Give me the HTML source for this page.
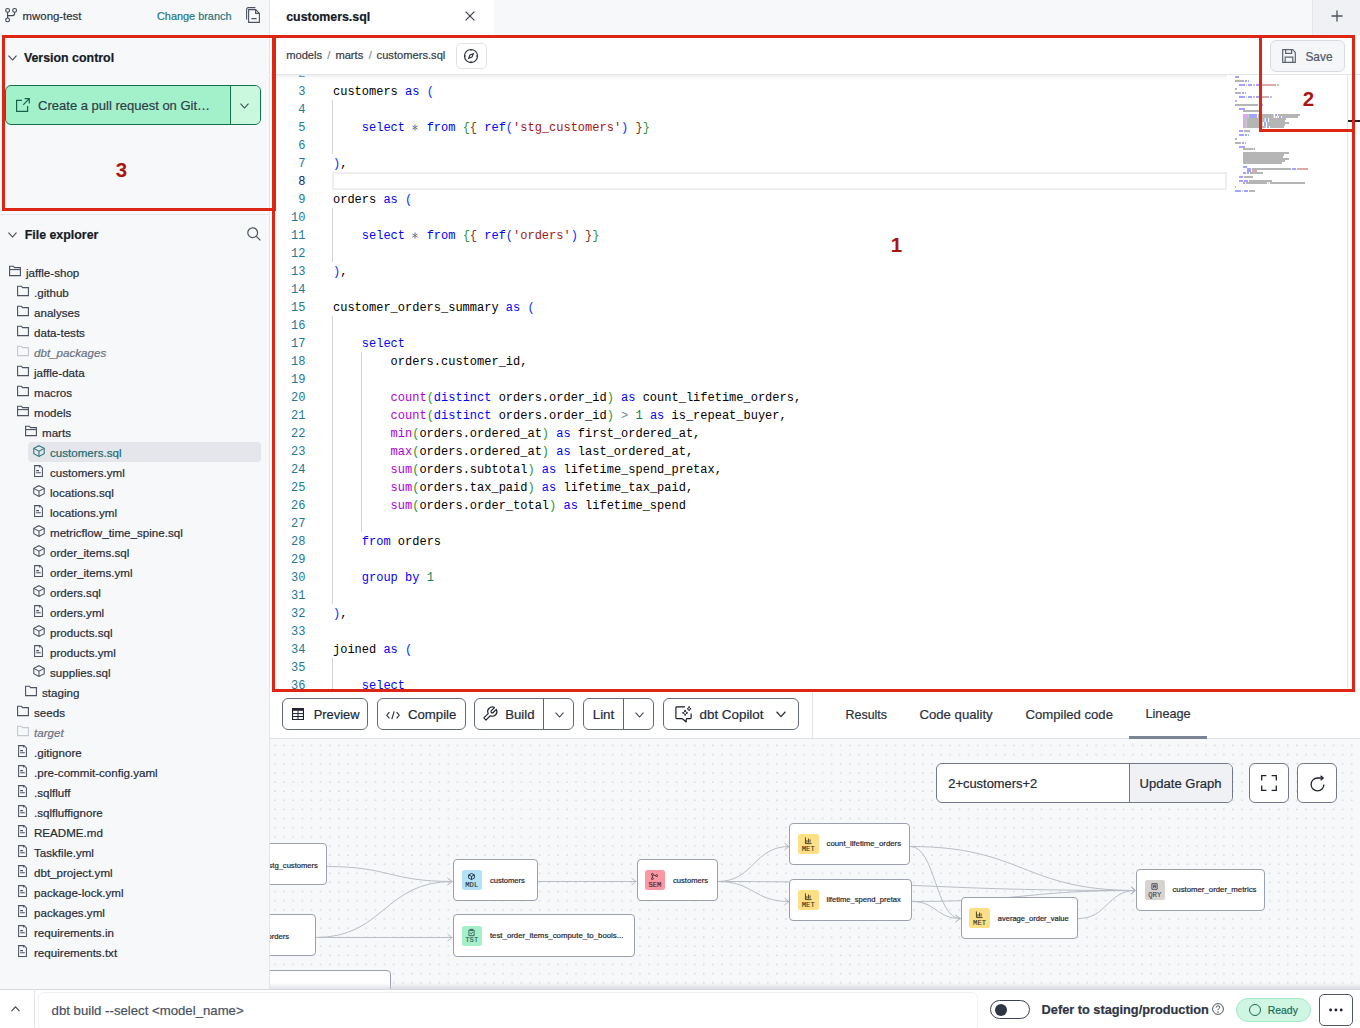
<!DOCTYPE html>
<html><head><meta charset="utf-8"><style>
*{box-sizing:border-box;margin:0;padding:0}
html,body{width:1360px;height:1028px;overflow:hidden;background:#fff;font-family:"Liberation Sans",sans-serif}
.abs{position:absolute}
.t{position:absolute;white-space:nowrap;line-height:1;-webkit-text-stroke:0.2px currentColor}
svg{position:absolute;overflow:visible}
.mono{font-family:"Liberation Mono",monospace}
.ln{position:absolute;left:0;width:34.5px;text-align:right;font-size:12px;line-height:18px}
.cl{position:absolute;left:62px;white-space:pre;font-size:12px;line-height:18px;color:#000}
.red{position:absolute;border:3px solid #dd2614}
.rl{position:absolute;color:#a8170f;font-weight:bold;font-size:20.5px;line-height:1}
</style></head><body>
<div class="abs" style="left:0;top:0;width:270px;height:989px;background:#f7f8fa;border-right:1px solid #e3e5ea"></div>
<svg style="left:5px;top:8px" width="12" height="14" viewBox="0 0 12 14" fill="none" stroke="#3d4452" stroke-width="1.1"><circle cx="2.6" cy="2.4" r="1.9"/><circle cx="9.6" cy="2.4" r="1.9"/><circle cx="2.6" cy="11.9" r="1.9"/><path d="M2.6 4.3V10M9.6 4.3V5.6Q9.6 7.6 7.6 7.6H2.6"/></svg>
<div class="t" style="left:22.6px;top:11.35px;font-size:11.4px;color:#2b3240;font-weight:normal;font-style:normal;">mwong-test</div>
<div class="t" style="left:157px;top:10.77px;font-size:10.9px;color:#23767b;font-weight:normal;font-style:normal;">Change branch</div>
<svg style="left:246px;top:7px" width="15" height="16" viewBox="0 0 15 16" fill="none" stroke="#4b5261" stroke-width="1.1"><path d="M0.6 12.6V2.4Q0.6 0.6 2.4 0.6H9.4"/><path d="M2.6 2.6H9.6L13.4 6.4V15.4H2.6Z"/><path d="M9.6 2.6V6.4H13.4M5.4 11.6H10.6"/></svg>
<svg style="left:8px;top:54.5px" width="9" height="6" viewBox="0 0 9 6" fill="none" stroke="#3d4452" stroke-width="1.1"><path d="M0.5 0.6L4.5 5L8.5 0.6"/></svg>
<div class="t" style="left:23.9px;top:51.50px;font-size:12.4px;color:#151b27;font-weight:bold;font-style:normal;">Version control</div>
<div class="abs" style="left:4.5px;top:85px;width:256.5px;height:40px;border:1px solid #12704f;border-radius:6px;background:#a3f1cb;overflow:hidden"><div class="abs" style="left:224px;top:0;width:33px;height:40px;background:#c9f8df;border-left:1px solid #12704f"></div></div>
<svg style="left:16px;top:98px" width="14" height="14" viewBox="0 0 14 14" fill="none" stroke="#18624b" stroke-width="1.2"><path d="M6 2.4H0.6V13.4H11.6V8"/><path d="M7.2 6.8L13.3 0.7M8.6 0.7H13.3V5.4"/></svg>
<div class="t" style="left:38.1px;top:99.40px;font-size:13.0px;color:#2f3d47;font-weight:normal;font-style:normal;">Create a pull request on Git…</div>
<svg style="left:240px;top:102.5px" width="9" height="6" viewBox="0 0 9 6" fill="none" stroke="#3b4a52" stroke-width="1.1"><path d="M0.5 0.6L4.5 5L8.5 0.6"/></svg>
<div class="abs" style="left:0;top:214px;width:270px;height:1px;background:#e3e5ea"></div>
<svg style="left:8px;top:231.5px" width="9" height="6" viewBox="0 0 9 6" fill="none" stroke="#3d4452" stroke-width="1.1"><path d="M0.5 0.6L4.5 5L8.5 0.6"/></svg>
<div class="t" style="left:24.7px;top:228.50px;font-size:12.4px;color:#151b27;font-weight:bold;font-style:normal;">File explorer</div>
<svg style="left:247px;top:226.5px" width="14" height="14" viewBox="0 0 14 14" fill="none" stroke="#4b5261" stroke-width="1.2"><circle cx="5.7" cy="5.7" r="4.9"/><path d="M9.3 9.3L13.3 13.3"/></svg>
<svg style="left:9px;top:265.2px" width="12" height="12" viewBox="0 0 12 12" fill="none" stroke="#4a5160" stroke-width="1.1"><path d="M0.6 1.2H4.4L5.6 2.6H11.4V10.6H0.6Z"/><path d="M0.6 4.6H11.4"/></svg>
<div class="t" style="left:26px;top:267.18px;font-size:11.6px;color:#262c37;font-weight:normal;font-style:normal;">jaffle-shop</div>
<svg style="left:17px;top:285.2px" width="12" height="12" viewBox="0 0 12 12" fill="none" stroke="#4a5160" stroke-width="1.1"><path d="M0.6 1.2H4.4L5.6 2.6H11.4V10.6H0.6Z"/></svg>
<div class="t" style="left:34px;top:287.18px;font-size:11.6px;color:#262c37;font-weight:normal;font-style:normal;">.github</div>
<svg style="left:17px;top:305.2px" width="12" height="12" viewBox="0 0 12 12" fill="none" stroke="#4a5160" stroke-width="1.1"><path d="M0.6 1.2H4.4L5.6 2.6H11.4V10.6H0.6Z"/></svg>
<div class="t" style="left:34px;top:307.18px;font-size:11.6px;color:#262c37;font-weight:normal;font-style:normal;">analyses</div>
<svg style="left:17px;top:325.2px" width="12" height="12" viewBox="0 0 12 12" fill="none" stroke="#4a5160" stroke-width="1.1"><path d="M0.6 1.2H4.4L5.6 2.6H11.4V10.6H0.6Z"/></svg>
<div class="t" style="left:34px;top:327.18px;font-size:11.6px;color:#262c37;font-weight:normal;font-style:normal;">data-tests</div>
<svg style="left:17px;top:345.2px" width="12" height="12" viewBox="0 0 12 12" fill="none" stroke="#c3c7cf" stroke-width="1.1"><path d="M0.6 1.2H4.4L5.6 2.6H11.4V10.6H0.6Z"/></svg>
<div class="t" style="left:34px;top:347.18px;font-size:11.6px;color:#6b7280;font-weight:normal;font-style:italic;">dbt_packages</div>
<svg style="left:17px;top:365.2px" width="12" height="12" viewBox="0 0 12 12" fill="none" stroke="#4a5160" stroke-width="1.1"><path d="M0.6 1.2H4.4L5.6 2.6H11.4V10.6H0.6Z"/></svg>
<div class="t" style="left:34px;top:367.18px;font-size:11.6px;color:#262c37;font-weight:normal;font-style:normal;">jaffle-data</div>
<svg style="left:17px;top:385.2px" width="12" height="12" viewBox="0 0 12 12" fill="none" stroke="#4a5160" stroke-width="1.1"><path d="M0.6 1.2H4.4L5.6 2.6H11.4V10.6H0.6Z"/></svg>
<div class="t" style="left:34px;top:387.18px;font-size:11.6px;color:#262c37;font-weight:normal;font-style:normal;">macros</div>
<svg style="left:17px;top:405.2px" width="12" height="12" viewBox="0 0 12 12" fill="none" stroke="#4a5160" stroke-width="1.1"><path d="M0.6 1.2H4.4L5.6 2.6H11.4V10.6H0.6Z"/><path d="M0.6 4.6H11.4"/></svg>
<div class="t" style="left:34px;top:407.18px;font-size:11.6px;color:#262c37;font-weight:normal;font-style:normal;">models</div>
<svg style="left:25px;top:425.2px" width="12" height="12" viewBox="0 0 12 12" fill="none" stroke="#4a5160" stroke-width="1.1"><path d="M0.6 1.2H4.4L5.6 2.6H11.4V10.6H0.6Z"/><path d="M0.6 4.6H11.4"/></svg>
<div class="t" style="left:42px;top:427.18px;font-size:11.6px;color:#262c37;font-weight:normal;font-style:normal;">marts</div>
<div class="abs" style="left:28px;top:442px;width:233px;height:20px;background:#e4e6eb;border-radius:4px"></div>
<svg style="left:33px;top:445px" width="12" height="12" viewBox="0 0 12 12" fill="none" stroke="#2b7479" stroke-width="1.05"><path d="M6 0.7L11.2 3.4V8.8L6 11.5L0.8 8.8V3.4Z"/><path d="M0.8 3.4L6 6.1L11.2 3.4M6 6.1V11.5"/></svg>
<div class="t" style="left:50px;top:447.18px;font-size:11.6px;color:#1b6b70;font-weight:normal;font-style:normal;">customers.sql</div>
<svg style="left:34.3px;top:465px" width="9" height="12" viewBox="0 0 9 12" fill="none" stroke="#4a5160" stroke-width="1.05"><path d="M0.6 0.6H6L8.4 3V11.4H0.6Z"/><path d="M5.6 0.6V2.6"/><path d="M2.2 5.6H5M2.2 7.8H6.8"/></svg>
<div class="t" style="left:50px;top:467.18px;font-size:11.6px;color:#262c37;font-weight:normal;font-style:normal;">customers.yml</div>
<svg style="left:33px;top:485px" width="12" height="12" viewBox="0 0 12 12" fill="none" stroke="#4a5160" stroke-width="1.05"><path d="M6 0.7L11.2 3.4V8.8L6 11.5L0.8 8.8V3.4Z"/><path d="M0.8 3.4L6 6.1L11.2 3.4M6 6.1V11.5"/></svg>
<div class="t" style="left:50px;top:487.18px;font-size:11.6px;color:#262c37;font-weight:normal;font-style:normal;">locations.sql</div>
<svg style="left:34.3px;top:505px" width="9" height="12" viewBox="0 0 9 12" fill="none" stroke="#4a5160" stroke-width="1.05"><path d="M0.6 0.6H6L8.4 3V11.4H0.6Z"/><path d="M5.6 0.6V2.6"/><path d="M2.2 5.6H5M2.2 7.8H6.8"/></svg>
<div class="t" style="left:50px;top:507.18px;font-size:11.6px;color:#262c37;font-weight:normal;font-style:normal;">locations.yml</div>
<svg style="left:33px;top:525px" width="12" height="12" viewBox="0 0 12 12" fill="none" stroke="#4a5160" stroke-width="1.05"><path d="M6 0.7L11.2 3.4V8.8L6 11.5L0.8 8.8V3.4Z"/><path d="M0.8 3.4L6 6.1L11.2 3.4M6 6.1V11.5"/></svg>
<div class="t" style="left:50px;top:527.18px;font-size:11.6px;color:#262c37;font-weight:normal;font-style:normal;">metricflow_time_spine.sql</div>
<svg style="left:33px;top:545px" width="12" height="12" viewBox="0 0 12 12" fill="none" stroke="#4a5160" stroke-width="1.05"><path d="M6 0.7L11.2 3.4V8.8L6 11.5L0.8 8.8V3.4Z"/><path d="M0.8 3.4L6 6.1L11.2 3.4M6 6.1V11.5"/></svg>
<div class="t" style="left:50px;top:547.18px;font-size:11.6px;color:#262c37;font-weight:normal;font-style:normal;">order_items.sql</div>
<svg style="left:34.3px;top:565px" width="9" height="12" viewBox="0 0 9 12" fill="none" stroke="#4a5160" stroke-width="1.05"><path d="M0.6 0.6H6L8.4 3V11.4H0.6Z"/><path d="M5.6 0.6V2.6"/><path d="M2.2 5.6H5M2.2 7.8H6.8"/></svg>
<div class="t" style="left:50px;top:567.18px;font-size:11.6px;color:#262c37;font-weight:normal;font-style:normal;">order_items.yml</div>
<svg style="left:33px;top:585px" width="12" height="12" viewBox="0 0 12 12" fill="none" stroke="#4a5160" stroke-width="1.05"><path d="M6 0.7L11.2 3.4V8.8L6 11.5L0.8 8.8V3.4Z"/><path d="M0.8 3.4L6 6.1L11.2 3.4M6 6.1V11.5"/></svg>
<div class="t" style="left:50px;top:587.18px;font-size:11.6px;color:#262c37;font-weight:normal;font-style:normal;">orders.sql</div>
<svg style="left:34.3px;top:605px" width="9" height="12" viewBox="0 0 9 12" fill="none" stroke="#4a5160" stroke-width="1.05"><path d="M0.6 0.6H6L8.4 3V11.4H0.6Z"/><path d="M5.6 0.6V2.6"/><path d="M2.2 5.6H5M2.2 7.8H6.8"/></svg>
<div class="t" style="left:50px;top:607.18px;font-size:11.6px;color:#262c37;font-weight:normal;font-style:normal;">orders.yml</div>
<svg style="left:33px;top:625px" width="12" height="12" viewBox="0 0 12 12" fill="none" stroke="#4a5160" stroke-width="1.05"><path d="M6 0.7L11.2 3.4V8.8L6 11.5L0.8 8.8V3.4Z"/><path d="M0.8 3.4L6 6.1L11.2 3.4M6 6.1V11.5"/></svg>
<div class="t" style="left:50px;top:627.18px;font-size:11.6px;color:#262c37;font-weight:normal;font-style:normal;">products.sql</div>
<svg style="left:34.3px;top:645px" width="9" height="12" viewBox="0 0 9 12" fill="none" stroke="#4a5160" stroke-width="1.05"><path d="M0.6 0.6H6L8.4 3V11.4H0.6Z"/><path d="M5.6 0.6V2.6"/><path d="M2.2 5.6H5M2.2 7.8H6.8"/></svg>
<div class="t" style="left:50px;top:647.18px;font-size:11.6px;color:#262c37;font-weight:normal;font-style:normal;">products.yml</div>
<svg style="left:33px;top:665px" width="12" height="12" viewBox="0 0 12 12" fill="none" stroke="#4a5160" stroke-width="1.05"><path d="M6 0.7L11.2 3.4V8.8L6 11.5L0.8 8.8V3.4Z"/><path d="M0.8 3.4L6 6.1L11.2 3.4M6 6.1V11.5"/></svg>
<div class="t" style="left:50px;top:667.18px;font-size:11.6px;color:#262c37;font-weight:normal;font-style:normal;">supplies.sql</div>
<svg style="left:25px;top:685.2px" width="12" height="12" viewBox="0 0 12 12" fill="none" stroke="#4a5160" stroke-width="1.1"><path d="M0.6 1.2H4.4L5.6 2.6H11.4V10.6H0.6Z"/></svg>
<div class="t" style="left:42px;top:687.18px;font-size:11.6px;color:#262c37;font-weight:normal;font-style:normal;">staging</div>
<svg style="left:17px;top:705.2px" width="12" height="12" viewBox="0 0 12 12" fill="none" stroke="#4a5160" stroke-width="1.1"><path d="M0.6 1.2H4.4L5.6 2.6H11.4V10.6H0.6Z"/></svg>
<div class="t" style="left:34px;top:707.18px;font-size:11.6px;color:#262c37;font-weight:normal;font-style:normal;">seeds</div>
<svg style="left:17px;top:725.2px" width="12" height="12" viewBox="0 0 12 12" fill="none" stroke="#c3c7cf" stroke-width="1.1"><path d="M0.6 1.2H4.4L5.6 2.6H11.4V10.6H0.6Z"/></svg>
<div class="t" style="left:34px;top:727.18px;font-size:11.6px;color:#6b7280;font-weight:normal;font-style:italic;">target</div>
<svg style="left:18.3px;top:745px" width="9" height="12" viewBox="0 0 9 12" fill="none" stroke="#4a5160" stroke-width="1.05"><path d="M0.6 0.6H6L8.4 3V11.4H0.6Z"/><path d="M5.6 0.6V2.6"/><path d="M2.2 5.6H5M2.2 7.8H6.8"/></svg>
<div class="t" style="left:34px;top:747.18px;font-size:11.6px;color:#262c37;font-weight:normal;font-style:normal;">.gitignore</div>
<svg style="left:18.3px;top:765px" width="9" height="12" viewBox="0 0 9 12" fill="none" stroke="#4a5160" stroke-width="1.05"><path d="M0.6 0.6H6L8.4 3V11.4H0.6Z"/><path d="M5.6 0.6V2.6"/><path d="M2.2 5.6H5M2.2 7.8H6.8"/></svg>
<div class="t" style="left:34px;top:767.18px;font-size:11.6px;color:#262c37;font-weight:normal;font-style:normal;">.pre-commit-config.yaml</div>
<svg style="left:18.3px;top:785px" width="9" height="12" viewBox="0 0 9 12" fill="none" stroke="#4a5160" stroke-width="1.05"><path d="M0.6 0.6H6L8.4 3V11.4H0.6Z"/><path d="M5.6 0.6V2.6"/><path d="M2.2 5.6H5M2.2 7.8H6.8"/></svg>
<div class="t" style="left:34px;top:787.18px;font-size:11.6px;color:#262c37;font-weight:normal;font-style:normal;">.sqlfluff</div>
<svg style="left:18.3px;top:805px" width="9" height="12" viewBox="0 0 9 12" fill="none" stroke="#4a5160" stroke-width="1.05"><path d="M0.6 0.6H6L8.4 3V11.4H0.6Z"/><path d="M5.6 0.6V2.6"/><path d="M2.2 5.6H5M2.2 7.8H6.8"/></svg>
<div class="t" style="left:34px;top:807.18px;font-size:11.6px;color:#262c37;font-weight:normal;font-style:normal;">.sqlfluffignore</div>
<svg style="left:18.3px;top:825px" width="9" height="12" viewBox="0 0 9 12" fill="none" stroke="#4a5160" stroke-width="1.05"><path d="M0.6 0.6H6L8.4 3V11.4H0.6Z"/><path d="M5.6 0.6V2.6"/><path d="M2.2 5.6H5M2.2 7.8H6.8"/></svg>
<div class="t" style="left:34px;top:827.18px;font-size:11.6px;color:#262c37;font-weight:normal;font-style:normal;">README.md</div>
<svg style="left:18.3px;top:845px" width="9" height="12" viewBox="0 0 9 12" fill="none" stroke="#4a5160" stroke-width="1.05"><path d="M0.6 0.6H6L8.4 3V11.4H0.6Z"/><path d="M5.6 0.6V2.6"/><path d="M2.2 5.6H5M2.2 7.8H6.8"/></svg>
<div class="t" style="left:34px;top:847.18px;font-size:11.6px;color:#262c37;font-weight:normal;font-style:normal;">Taskfile.yml</div>
<svg style="left:18.3px;top:865px" width="9" height="12" viewBox="0 0 9 12" fill="none" stroke="#4a5160" stroke-width="1.05"><path d="M0.6 0.6H6L8.4 3V11.4H0.6Z"/><path d="M5.6 0.6V2.6"/><path d="M2.2 5.6H5M2.2 7.8H6.8"/></svg>
<div class="t" style="left:34px;top:867.18px;font-size:11.6px;color:#262c37;font-weight:normal;font-style:normal;">dbt_project.yml</div>
<svg style="left:18.3px;top:885px" width="9" height="12" viewBox="0 0 9 12" fill="none" stroke="#4a5160" stroke-width="1.05"><path d="M0.6 0.6H6L8.4 3V11.4H0.6Z"/><path d="M5.6 0.6V2.6"/><path d="M2.2 5.6H5M2.2 7.8H6.8"/></svg>
<div class="t" style="left:34px;top:887.18px;font-size:11.6px;color:#262c37;font-weight:normal;font-style:normal;">package-lock.yml</div>
<svg style="left:18.3px;top:905px" width="9" height="12" viewBox="0 0 9 12" fill="none" stroke="#4a5160" stroke-width="1.05"><path d="M0.6 0.6H6L8.4 3V11.4H0.6Z"/><path d="M5.6 0.6V2.6"/><path d="M2.2 5.6H5M2.2 7.8H6.8"/></svg>
<div class="t" style="left:34px;top:907.18px;font-size:11.6px;color:#262c37;font-weight:normal;font-style:normal;">packages.yml</div>
<svg style="left:18.3px;top:925px" width="9" height="12" viewBox="0 0 9 12" fill="none" stroke="#4a5160" stroke-width="1.05"><path d="M0.6 0.6H6L8.4 3V11.4H0.6Z"/><path d="M5.6 0.6V2.6"/><path d="M2.2 5.6H5M2.2 7.8H6.8"/></svg>
<div class="t" style="left:34px;top:927.18px;font-size:11.6px;color:#262c37;font-weight:normal;font-style:normal;">requirements.in</div>
<svg style="left:18.3px;top:945px" width="9" height="12" viewBox="0 0 9 12" fill="none" stroke="#4a5160" stroke-width="1.05"><path d="M0.6 0.6H6L8.4 3V11.4H0.6Z"/><path d="M5.6 0.6V2.6"/><path d="M2.2 5.6H5M2.2 7.8H6.8"/></svg>
<div class="t" style="left:34px;top:947.18px;font-size:11.6px;color:#262c37;font-weight:normal;font-style:normal;">requirements.txt</div>
<div class="abs" style="left:270px;top:0;width:1090px;height:36px;background:#f7f8fa"></div>
<div class="abs" style="left:270px;top:0;width:224px;height:36px;background:#fff"></div>
<div class="abs" style="left:1312px;top:0;width:48px;height:35px;background:#f0f1f4;border-left:1px solid #e3e5ea"></div>
<div class="t" style="left:286.2px;top:10.50px;font-size:12.4px;color:#141a26;font-weight:bold;font-style:normal;">customers.sql</div>
<svg style="left:465px;top:11px" width="10" height="10" viewBox="0 0 10 10" fill="none" stroke="#3a404c" stroke-width="1.2"><path d="M0.6 0.6L9.4 9.4M9.4 0.6L0.6 9.4"/></svg>
<svg style="left:1331px;top:10px" width="12" height="12" viewBox="0 0 12 12" fill="none" stroke="#4b5261" stroke-width="1.3"><path d="M6 0.5V11.5M0.5 6H11.5"/></svg>
<div class="abs" style="left:271px;top:36px;width:1089px;height:656px;background:#fff"></div>
<div class="abs" style="left:271px;top:36px;width:1089px;height:39px;background:#fff;border-bottom:1px solid #e3e5ea"></div>
<div class="t" style="left:286.2px;top:49.76px;font-size:11.15px;color:#333a46;font-weight:normal;font-style:normal;">models</div>
<div class="t" style="left:327.3px;top:49.76px;font-size:11.15px;color:#8a909a;font-weight:normal;font-style:normal;">/</div>
<div class="t" style="left:335.4px;top:49.76px;font-size:11.15px;color:#333a46;font-weight:normal;font-style:normal;">marts</div>
<div class="t" style="left:368.8px;top:49.76px;font-size:11.15px;color:#8a909a;font-weight:normal;font-style:normal;">/</div>
<div class="t" style="left:376.6px;top:49.76px;font-size:11.15px;color:#333a46;font-weight:normal;font-style:normal;">customers.sql</div>
<div class="abs" style="left:455.5px;top:43px;width:31px;height:25.5px;border:1px solid #dfe2e7;border-radius:5px;background:#fff"></div>
<svg style="left:464px;top:49px" width="14" height="14" viewBox="0 0 14 14" fill="none" stroke="#2f3542" stroke-width="1.15"><circle cx="7" cy="7" r="6.55"/><path d="M9.3 4.7L8 8L4.7 9.3L6 6Z"/><path d="M7 0.5V2.1M7 11.9V13.5M0.5 7H2.1M11.9 7H13.5" stroke-width="1"/></svg>
<div class="abs" style="left:1269.5px;top:40px;width:75px;height:31.5px;border:1px solid #d7dae0;border-radius:6px;background:#f5f6f8"></div>
<svg style="left:1282px;top:49px" width="14" height="14" viewBox="0 0 14 14" fill="none" stroke="#5b6270" stroke-width="1.2"><path d="M0.7 0.7H10.6L13.3 3.4V13.3H0.7Z"/><path d="M3.6 0.7V4.4H9.6V0.7M3.2 13.3V8.2H10.8V13.3"/></svg>
<div class="t" style="left:1305.4px;top:51.83px;font-size:11.9px;color:#535a68;font-weight:normal;font-style:normal;">Save</div>
<div class="abs" style="left:271px;top:75px;width:1077px;height:617px;overflow:hidden">
<div class="abs" style="left:61px;top:97px;width:895px;height:18px;border:2px solid #eeeeee"></div>
<div class="mono ln" style="top:-10px;color:#237893">2</div>
<div class="mono ln" style="top:8px;color:#237893">3</div>
<div class="mono cl" style="top:8px">customers <span style="color:#0000ff">as</span> <span style="color:#0431fa">(</span></div>
<div class="mono ln" style="top:26px;color:#237893">4</div>
<div class="abs" style="left:61.0px;top:25px;width:1px;height:18px;background:#d3d3d3"></div>
<div class="mono ln" style="top:44px;color:#237893">5</div>
<div class="abs" style="left:61.0px;top:43px;width:1px;height:18px;background:#d3d3d3"></div>
<div class="mono cl" style="top:44px">    <span style="color:#0000ff">select</span> <span style="display:inline-block;width:7.2px;height:1px;position:relative"><svg style="left:-0.1px;top:-5.7px" width="6" height="7" viewBox="0 0 6 7" fill="none" stroke="#6b7886" stroke-width="1"><path d="M3 0.4V6.6M0.35 1.9L5.65 5.1M0.35 5.1L5.65 1.9"/></svg></span> <span style="color:#0000ff">from</span> <span style="color:#319331">{</span><span style="color:#7b3814">{</span> <span style="color:#0000ff">ref</span><span style="color:#0431fa">(</span><span style="color:#a31515">&#x27;stg_customers&#x27;</span><span style="color:#0431fa">)</span> <span style="color:#7b3814">}</span><span style="color:#319331">}</span></div>
<div class="mono ln" style="top:62px;color:#237893">6</div>
<div class="abs" style="left:61.0px;top:61px;width:1px;height:18px;background:#d3d3d3"></div>
<div class="mono ln" style="top:80px;color:#237893">7</div>
<div class="mono cl" style="top:80px"><span style="color:#0431fa">)</span>,</div>
<div class="mono ln" style="top:98px;color:#0b216f">8</div>
<div class="mono ln" style="top:116px;color:#237893">9</div>
<div class="mono cl" style="top:116px">orders <span style="color:#0000ff">as</span> <span style="color:#0431fa">(</span></div>
<div class="mono ln" style="top:134px;color:#237893">10</div>
<div class="abs" style="left:61.0px;top:133px;width:1px;height:18px;background:#d3d3d3"></div>
<div class="mono ln" style="top:152px;color:#237893">11</div>
<div class="abs" style="left:61.0px;top:151px;width:1px;height:18px;background:#d3d3d3"></div>
<div class="mono cl" style="top:152px">    <span style="color:#0000ff">select</span> <span style="display:inline-block;width:7.2px;height:1px;position:relative"><svg style="left:-0.1px;top:-5.7px" width="6" height="7" viewBox="0 0 6 7" fill="none" stroke="#6b7886" stroke-width="1"><path d="M3 0.4V6.6M0.35 1.9L5.65 5.1M0.35 5.1L5.65 1.9"/></svg></span> <span style="color:#0000ff">from</span> <span style="color:#319331">{</span><span style="color:#7b3814">{</span> <span style="color:#0000ff">ref</span><span style="color:#0431fa">(</span><span style="color:#a31515">&#x27;orders&#x27;</span><span style="color:#0431fa">)</span> <span style="color:#7b3814">}</span><span style="color:#319331">}</span></div>
<div class="mono ln" style="top:170px;color:#237893">12</div>
<div class="abs" style="left:61.0px;top:169px;width:1px;height:18px;background:#d3d3d3"></div>
<div class="mono ln" style="top:188px;color:#237893">13</div>
<div class="mono cl" style="top:188px"><span style="color:#0431fa">)</span>,</div>
<div class="mono ln" style="top:206px;color:#237893">14</div>
<div class="mono ln" style="top:224px;color:#237893">15</div>
<div class="mono cl" style="top:224px">customer_orders_summary <span style="color:#0000ff">as</span> <span style="color:#0431fa">(</span></div>
<div class="mono ln" style="top:242px;color:#237893">16</div>
<div class="abs" style="left:61.0px;top:241px;width:1px;height:18px;background:#d3d3d3"></div>
<div class="mono ln" style="top:260px;color:#237893">17</div>
<div class="abs" style="left:61.0px;top:259px;width:1px;height:18px;background:#d3d3d3"></div>
<div class="mono cl" style="top:260px">    <span style="color:#0000ff">select</span></div>
<div class="mono ln" style="top:278px;color:#237893">18</div>
<div class="abs" style="left:61.0px;top:277px;width:1px;height:18px;background:#d3d3d3"></div>
<div class="abs" style="left:89.8px;top:277px;width:1px;height:18px;background:#d3d3d3"></div>
<div class="mono cl" style="top:278px">        orders.customer_id,</div>
<div class="mono ln" style="top:296px;color:#237893">19</div>
<div class="abs" style="left:61.0px;top:295px;width:1px;height:18px;background:#d3d3d3"></div>
<div class="abs" style="left:89.8px;top:295px;width:1px;height:18px;background:#d3d3d3"></div>
<div class="mono ln" style="top:314px;color:#237893">20</div>
<div class="abs" style="left:61.0px;top:313px;width:1px;height:18px;background:#d3d3d3"></div>
<div class="abs" style="left:89.8px;top:313px;width:1px;height:18px;background:#d3d3d3"></div>
<div class="mono cl" style="top:314px">        <span style="color:#af00db">count</span><span style="color:#319331">(</span><span style="color:#0000ff">distinct</span> orders.order_id<span style="color:#319331">)</span> <span style="color:#0000ff">as</span> count_lifetime_orders,</div>
<div class="mono ln" style="top:332px;color:#237893">21</div>
<div class="abs" style="left:61.0px;top:331px;width:1px;height:18px;background:#d3d3d3"></div>
<div class="abs" style="left:89.8px;top:331px;width:1px;height:18px;background:#d3d3d3"></div>
<div class="mono cl" style="top:332px">        <span style="color:#af00db">count</span><span style="color:#319331">(</span><span style="color:#0000ff">distinct</span> orders.order_id<span style="color:#319331">)</span> <span style="color:#778899">&gt;</span> <span style="color:#098658">1</span> <span style="color:#0000ff">as</span> is_repeat_buyer,</div>
<div class="mono ln" style="top:350px;color:#237893">22</div>
<div class="abs" style="left:61.0px;top:349px;width:1px;height:18px;background:#d3d3d3"></div>
<div class="abs" style="left:89.8px;top:349px;width:1px;height:18px;background:#d3d3d3"></div>
<div class="mono cl" style="top:350px">        <span style="color:#af00db">min</span><span style="color:#319331">(</span>orders.ordered_at<span style="color:#319331">)</span> <span style="color:#0000ff">as</span> first_ordered_at,</div>
<div class="mono ln" style="top:368px;color:#237893">23</div>
<div class="abs" style="left:61.0px;top:367px;width:1px;height:18px;background:#d3d3d3"></div>
<div class="abs" style="left:89.8px;top:367px;width:1px;height:18px;background:#d3d3d3"></div>
<div class="mono cl" style="top:368px">        <span style="color:#af00db">max</span><span style="color:#319331">(</span>orders.ordered_at<span style="color:#319331">)</span> <span style="color:#0000ff">as</span> last_ordered_at,</div>
<div class="mono ln" style="top:386px;color:#237893">24</div>
<div class="abs" style="left:61.0px;top:385px;width:1px;height:18px;background:#d3d3d3"></div>
<div class="abs" style="left:89.8px;top:385px;width:1px;height:18px;background:#d3d3d3"></div>
<div class="mono cl" style="top:386px">        <span style="color:#af00db">sum</span><span style="color:#319331">(</span>orders.subtotal<span style="color:#319331">)</span> <span style="color:#0000ff">as</span> lifetime_spend_pretax,</div>
<div class="mono ln" style="top:404px;color:#237893">25</div>
<div class="abs" style="left:61.0px;top:403px;width:1px;height:18px;background:#d3d3d3"></div>
<div class="abs" style="left:89.8px;top:403px;width:1px;height:18px;background:#d3d3d3"></div>
<div class="mono cl" style="top:404px">        <span style="color:#af00db">sum</span><span style="color:#319331">(</span>orders.tax_paid<span style="color:#319331">)</span> <span style="color:#0000ff">as</span> lifetime_tax_paid,</div>
<div class="mono ln" style="top:422px;color:#237893">26</div>
<div class="abs" style="left:61.0px;top:421px;width:1px;height:18px;background:#d3d3d3"></div>
<div class="abs" style="left:89.8px;top:421px;width:1px;height:18px;background:#d3d3d3"></div>
<div class="mono cl" style="top:422px">        <span style="color:#af00db">sum</span><span style="color:#319331">(</span>orders.order_total<span style="color:#319331">)</span> <span style="color:#0000ff">as</span> lifetime_spend</div>
<div class="mono ln" style="top:440px;color:#237893">27</div>
<div class="abs" style="left:61.0px;top:439px;width:1px;height:18px;background:#d3d3d3"></div>
<div class="abs" style="left:89.8px;top:439px;width:1px;height:18px;background:#d3d3d3"></div>
<div class="mono ln" style="top:458px;color:#237893">28</div>
<div class="abs" style="left:61.0px;top:457px;width:1px;height:18px;background:#d3d3d3"></div>
<div class="mono cl" style="top:458px">    <span style="color:#0000ff">from</span> orders</div>
<div class="mono ln" style="top:476px;color:#237893">29</div>
<div class="abs" style="left:61.0px;top:475px;width:1px;height:18px;background:#d3d3d3"></div>
<div class="mono ln" style="top:494px;color:#237893">30</div>
<div class="abs" style="left:61.0px;top:493px;width:1px;height:18px;background:#d3d3d3"></div>
<div class="mono cl" style="top:494px">    <span style="color:#0000ff">group</span> <span style="color:#0000ff">by</span> <span style="color:#098658">1</span></div>
<div class="mono ln" style="top:512px;color:#237893">31</div>
<div class="abs" style="left:61.0px;top:511px;width:1px;height:18px;background:#d3d3d3"></div>
<div class="mono ln" style="top:530px;color:#237893">32</div>
<div class="mono cl" style="top:530px"><span style="color:#0431fa">)</span>,</div>
<div class="mono ln" style="top:548px;color:#237893">33</div>
<div class="mono ln" style="top:566px;color:#237893">34</div>
<div class="mono cl" style="top:566px">joined <span style="color:#0000ff">as</span> <span style="color:#0431fa">(</span></div>
<div class="mono ln" style="top:584px;color:#237893">35</div>
<div class="abs" style="left:61.0px;top:583px;width:1px;height:18px;background:#d3d3d3"></div>
<div class="mono ln" style="top:602px;color:#237893">36</div>
<div class="abs" style="left:61.0px;top:601px;width:1px;height:18px;background:#d3d3d3"></div>
<div class="mono cl" style="top:602px">    <span style="color:#0000ff">select</span></div>
<div class="mono ln" style="top:620px;color:#237893">37</div>
<div class="abs" style="left:61.0px;top:619px;width:1px;height:18px;background:#d3d3d3"></div>
<div class="abs" style="left:89.8px;top:619px;width:1px;height:18px;background:#d3d3d3"></div>
<div class="mono cl" style="top:620px">        customers.<span style="display:inline-block;width:7.2px;height:1px;position:relative"><svg style="left:-0.1px;top:-5.7px" width="6" height="7" viewBox="0 0 6 7" fill="none" stroke="#6b7886" stroke-width="1"><path d="M3 0.4V6.6M0.35 1.9L5.65 5.1M0.35 5.1L5.65 1.9"/></svg></span>,</div>
<div class="abs" style="left:0;top:0;width:956px;height:6px;box-shadow:inset 0 6px 6px -6px #dddddd"></div>
</div>
<div class="abs" style="left:1227px;top:75px;width:121px;height:617px;overflow:hidden;background:#fff">
<div class="abs" style="left:8px;top:1px;width:4px;height:2px;background:#0000ff;opacity:0.36"></div>

<div class="abs" style="left:8px;top:5px;width:9px;height:2px;background:#333333;opacity:0.36"></div><div class="abs" style="left:18px;top:5px;width:2px;height:2px;background:#0000ff;opacity:0.36"></div><div class="abs" style="left:21px;top:5px;width:1px;height:2px;background:#0431fa;opacity:0.36"></div>

<div class="abs" style="left:12px;top:9px;width:6px;height:2px;background:#0000ff;opacity:0.36"></div><div class="abs" style="left:19px;top:9px;width:1px;height:2px;background:#778899;opacity:0.36"></div><div class="abs" style="left:21px;top:9px;width:4px;height:2px;background:#0000ff;opacity:0.36"></div><div class="abs" style="left:26px;top:9px;width:1px;height:2px;background:#319331;opacity:0.36"></div><div class="abs" style="left:27px;top:9px;width:1px;height:2px;background:#7b3814;opacity:0.36"></div><div class="abs" style="left:29px;top:9px;width:3px;height:2px;background:#0000ff;opacity:0.36"></div><div class="abs" style="left:32px;top:9px;width:1px;height:2px;background:#0431fa;opacity:0.36"></div><div class="abs" style="left:33px;top:9px;width:15px;height:2px;background:#a31515;opacity:0.36"></div><div class="abs" style="left:48px;top:9px;width:1px;height:2px;background:#0431fa;opacity:0.36"></div><div class="abs" style="left:50px;top:9px;width:1px;height:2px;background:#7b3814;opacity:0.36"></div><div class="abs" style="left:51px;top:9px;width:1px;height:2px;background:#319331;opacity:0.36"></div>

<div class="abs" style="left:8px;top:13px;width:1px;height:2px;background:#0431fa;opacity:0.36"></div><div class="abs" style="left:9px;top:13px;width:1px;height:2px;background:#333333;opacity:0.36"></div>

<div class="abs" style="left:8px;top:17px;width:6px;height:2px;background:#333333;opacity:0.36"></div><div class="abs" style="left:15px;top:17px;width:2px;height:2px;background:#0000ff;opacity:0.36"></div><div class="abs" style="left:18px;top:17px;width:1px;height:2px;background:#0431fa;opacity:0.36"></div>

<div class="abs" style="left:12px;top:21px;width:6px;height:2px;background:#0000ff;opacity:0.36"></div><div class="abs" style="left:19px;top:21px;width:1px;height:2px;background:#778899;opacity:0.36"></div><div class="abs" style="left:21px;top:21px;width:4px;height:2px;background:#0000ff;opacity:0.36"></div><div class="abs" style="left:26px;top:21px;width:1px;height:2px;background:#319331;opacity:0.36"></div><div class="abs" style="left:27px;top:21px;width:1px;height:2px;background:#7b3814;opacity:0.36"></div><div class="abs" style="left:29px;top:21px;width:3px;height:2px;background:#0000ff;opacity:0.36"></div><div class="abs" style="left:32px;top:21px;width:1px;height:2px;background:#0431fa;opacity:0.36"></div><div class="abs" style="left:33px;top:21px;width:8px;height:2px;background:#a31515;opacity:0.36"></div><div class="abs" style="left:41px;top:21px;width:1px;height:2px;background:#0431fa;opacity:0.36"></div><div class="abs" style="left:43px;top:21px;width:1px;height:2px;background:#7b3814;opacity:0.36"></div><div class="abs" style="left:44px;top:21px;width:1px;height:2px;background:#319331;opacity:0.36"></div>

<div class="abs" style="left:8px;top:25px;width:1px;height:2px;background:#0431fa;opacity:0.36"></div><div class="abs" style="left:9px;top:25px;width:1px;height:2px;background:#333333;opacity:0.36"></div>

<div class="abs" style="left:8px;top:29px;width:23px;height:2px;background:#333333;opacity:0.36"></div><div class="abs" style="left:32px;top:29px;width:2px;height:2px;background:#0000ff;opacity:0.36"></div><div class="abs" style="left:35px;top:29px;width:1px;height:2px;background:#0431fa;opacity:0.36"></div>

<div class="abs" style="left:12px;top:33px;width:6px;height:2px;background:#0000ff;opacity:0.36"></div>
<div class="abs" style="left:16px;top:35px;width:6px;height:2px;background:#333333;opacity:0.36"></div><div class="abs" style="left:22px;top:35px;width:1px;height:2px;background:#333333;opacity:0.36"></div><div class="abs" style="left:23px;top:35px;width:11px;height:2px;background:#333333;opacity:0.36"></div><div class="abs" style="left:34px;top:35px;width:1px;height:2px;background:#333333;opacity:0.36"></div>

<div class="abs" style="left:16px;top:39px;width:5px;height:2px;background:#af00db;opacity:0.36"></div><div class="abs" style="left:21px;top:39px;width:1px;height:2px;background:#319331;opacity:0.36"></div><div class="abs" style="left:22px;top:39px;width:8px;height:2px;background:#0000ff;opacity:0.36"></div><div class="abs" style="left:31px;top:39px;width:6px;height:2px;background:#333333;opacity:0.36"></div><div class="abs" style="left:37px;top:39px;width:1px;height:2px;background:#333333;opacity:0.36"></div><div class="abs" style="left:38px;top:39px;width:8px;height:2px;background:#333333;opacity:0.36"></div><div class="abs" style="left:46px;top:39px;width:1px;height:2px;background:#319331;opacity:0.36"></div><div class="abs" style="left:48px;top:39px;width:2px;height:2px;background:#0000ff;opacity:0.36"></div><div class="abs" style="left:51px;top:39px;width:21px;height:2px;background:#333333;opacity:0.36"></div><div class="abs" style="left:72px;top:39px;width:1px;height:2px;background:#333333;opacity:0.36"></div>
<div class="abs" style="left:16px;top:41px;width:5px;height:2px;background:#af00db;opacity:0.36"></div><div class="abs" style="left:21px;top:41px;width:1px;height:2px;background:#319331;opacity:0.36"></div><div class="abs" style="left:22px;top:41px;width:8px;height:2px;background:#0000ff;opacity:0.36"></div><div class="abs" style="left:31px;top:41px;width:6px;height:2px;background:#333333;opacity:0.36"></div><div class="abs" style="left:37px;top:41px;width:1px;height:2px;background:#333333;opacity:0.36"></div><div class="abs" style="left:38px;top:41px;width:8px;height:2px;background:#333333;opacity:0.36"></div><div class="abs" style="left:46px;top:41px;width:1px;height:2px;background:#319331;opacity:0.36"></div><div class="abs" style="left:48px;top:41px;width:1px;height:2px;background:#778899;opacity:0.36"></div><div class="abs" style="left:50px;top:41px;width:1px;height:2px;background:#098658;opacity:0.36"></div><div class="abs" style="left:52px;top:41px;width:2px;height:2px;background:#0000ff;opacity:0.36"></div><div class="abs" style="left:55px;top:41px;width:15px;height:2px;background:#333333;opacity:0.36"></div><div class="abs" style="left:70px;top:41px;width:1px;height:2px;background:#333333;opacity:0.36"></div>
<div class="abs" style="left:16px;top:43px;width:3px;height:2px;background:#af00db;opacity:0.36"></div><div class="abs" style="left:19px;top:43px;width:1px;height:2px;background:#319331;opacity:0.36"></div><div class="abs" style="left:20px;top:43px;width:6px;height:2px;background:#333333;opacity:0.36"></div><div class="abs" style="left:26px;top:43px;width:1px;height:2px;background:#333333;opacity:0.36"></div><div class="abs" style="left:27px;top:43px;width:10px;height:2px;background:#333333;opacity:0.36"></div><div class="abs" style="left:37px;top:43px;width:1px;height:2px;background:#319331;opacity:0.36"></div><div class="abs" style="left:39px;top:43px;width:2px;height:2px;background:#0000ff;opacity:0.36"></div><div class="abs" style="left:42px;top:43px;width:16px;height:2px;background:#333333;opacity:0.36"></div><div class="abs" style="left:58px;top:43px;width:1px;height:2px;background:#333333;opacity:0.36"></div>
<div class="abs" style="left:16px;top:45px;width:3px;height:2px;background:#af00db;opacity:0.36"></div><div class="abs" style="left:19px;top:45px;width:1px;height:2px;background:#319331;opacity:0.36"></div><div class="abs" style="left:20px;top:45px;width:6px;height:2px;background:#333333;opacity:0.36"></div><div class="abs" style="left:26px;top:45px;width:1px;height:2px;background:#333333;opacity:0.36"></div><div class="abs" style="left:27px;top:45px;width:10px;height:2px;background:#333333;opacity:0.36"></div><div class="abs" style="left:37px;top:45px;width:1px;height:2px;background:#319331;opacity:0.36"></div><div class="abs" style="left:39px;top:45px;width:2px;height:2px;background:#0000ff;opacity:0.36"></div><div class="abs" style="left:42px;top:45px;width:15px;height:2px;background:#333333;opacity:0.36"></div><div class="abs" style="left:57px;top:45px;width:1px;height:2px;background:#333333;opacity:0.36"></div>
<div class="abs" style="left:16px;top:47px;width:3px;height:2px;background:#af00db;opacity:0.36"></div><div class="abs" style="left:19px;top:47px;width:1px;height:2px;background:#319331;opacity:0.36"></div><div class="abs" style="left:20px;top:47px;width:6px;height:2px;background:#333333;opacity:0.36"></div><div class="abs" style="left:26px;top:47px;width:1px;height:2px;background:#333333;opacity:0.36"></div><div class="abs" style="left:27px;top:47px;width:8px;height:2px;background:#333333;opacity:0.36"></div><div class="abs" style="left:35px;top:47px;width:1px;height:2px;background:#319331;opacity:0.36"></div><div class="abs" style="left:37px;top:47px;width:2px;height:2px;background:#0000ff;opacity:0.36"></div><div class="abs" style="left:40px;top:47px;width:21px;height:2px;background:#333333;opacity:0.36"></div><div class="abs" style="left:61px;top:47px;width:1px;height:2px;background:#333333;opacity:0.36"></div>
<div class="abs" style="left:16px;top:49px;width:3px;height:2px;background:#af00db;opacity:0.36"></div><div class="abs" style="left:19px;top:49px;width:1px;height:2px;background:#319331;opacity:0.36"></div><div class="abs" style="left:20px;top:49px;width:6px;height:2px;background:#333333;opacity:0.36"></div><div class="abs" style="left:26px;top:49px;width:1px;height:2px;background:#333333;opacity:0.36"></div><div class="abs" style="left:27px;top:49px;width:8px;height:2px;background:#333333;opacity:0.36"></div><div class="abs" style="left:35px;top:49px;width:1px;height:2px;background:#319331;opacity:0.36"></div><div class="abs" style="left:37px;top:49px;width:2px;height:2px;background:#0000ff;opacity:0.36"></div><div class="abs" style="left:40px;top:49px;width:17px;height:2px;background:#333333;opacity:0.36"></div><div class="abs" style="left:57px;top:49px;width:1px;height:2px;background:#333333;opacity:0.36"></div>
<div class="abs" style="left:16px;top:51px;width:3px;height:2px;background:#af00db;opacity:0.36"></div><div class="abs" style="left:19px;top:51px;width:1px;height:2px;background:#319331;opacity:0.36"></div><div class="abs" style="left:20px;top:51px;width:6px;height:2px;background:#333333;opacity:0.36"></div><div class="abs" style="left:26px;top:51px;width:1px;height:2px;background:#333333;opacity:0.36"></div><div class="abs" style="left:27px;top:51px;width:11px;height:2px;background:#333333;opacity:0.36"></div><div class="abs" style="left:38px;top:51px;width:1px;height:2px;background:#319331;opacity:0.36"></div><div class="abs" style="left:40px;top:51px;width:2px;height:2px;background:#0000ff;opacity:0.36"></div><div class="abs" style="left:43px;top:51px;width:14px;height:2px;background:#333333;opacity:0.36"></div>

<div class="abs" style="left:12px;top:55px;width:4px;height:2px;background:#0000ff;opacity:0.36"></div><div class="abs" style="left:17px;top:55px;width:6px;height:2px;background:#333333;opacity:0.36"></div>

<div class="abs" style="left:12px;top:59px;width:5px;height:2px;background:#0000ff;opacity:0.36"></div><div class="abs" style="left:18px;top:59px;width:2px;height:2px;background:#0000ff;opacity:0.36"></div><div class="abs" style="left:21px;top:59px;width:1px;height:2px;background:#098658;opacity:0.36"></div>

<div class="abs" style="left:8px;top:63px;width:1px;height:2px;background:#0431fa;opacity:0.36"></div><div class="abs" style="left:9px;top:63px;width:1px;height:2px;background:#333333;opacity:0.36"></div>

<div class="abs" style="left:8px;top:67px;width:6px;height:2px;background:#333333;opacity:0.36"></div><div class="abs" style="left:15px;top:67px;width:2px;height:2px;background:#0000ff;opacity:0.36"></div><div class="abs" style="left:18px;top:67px;width:1px;height:2px;background:#0431fa;opacity:0.36"></div>

<div class="abs" style="left:12px;top:71px;width:6px;height:2px;background:#0000ff;opacity:0.36"></div>
<div class="abs" style="left:16px;top:73px;width:9px;height:2px;background:#333333;opacity:0.36"></div><div class="abs" style="left:25px;top:73px;width:1px;height:2px;background:#333333;opacity:0.36"></div><div class="abs" style="left:26px;top:73px;width:1px;height:2px;background:#778899;opacity:0.36"></div><div class="abs" style="left:27px;top:73px;width:1px;height:2px;background:#333333;opacity:0.36"></div>

<div class="abs" style="left:16px;top:77px;width:23px;height:2px;background:#333333;opacity:0.36"></div><div class="abs" style="left:39px;top:77px;width:1px;height:2px;background:#333333;opacity:0.36"></div><div class="abs" style="left:40px;top:77px;width:21px;height:2px;background:#333333;opacity:0.36"></div><div class="abs" style="left:61px;top:77px;width:1px;height:2px;background:#333333;opacity:0.36"></div>
<div class="abs" style="left:16px;top:79px;width:23px;height:2px;background:#333333;opacity:0.36"></div><div class="abs" style="left:39px;top:79px;width:1px;height:2px;background:#333333;opacity:0.36"></div><div class="abs" style="left:40px;top:79px;width:16px;height:2px;background:#333333;opacity:0.36"></div><div class="abs" style="left:56px;top:79px;width:1px;height:2px;background:#333333;opacity:0.36"></div>
<div class="abs" style="left:16px;top:81px;width:23px;height:2px;background:#333333;opacity:0.36"></div><div class="abs" style="left:39px;top:81px;width:1px;height:2px;background:#333333;opacity:0.36"></div><div class="abs" style="left:40px;top:81px;width:15px;height:2px;background:#333333;opacity:0.36"></div><div class="abs" style="left:55px;top:81px;width:1px;height:2px;background:#333333;opacity:0.36"></div>
<div class="abs" style="left:16px;top:83px;width:23px;height:2px;background:#333333;opacity:0.36"></div><div class="abs" style="left:39px;top:83px;width:1px;height:2px;background:#333333;opacity:0.36"></div><div class="abs" style="left:40px;top:83px;width:21px;height:2px;background:#333333;opacity:0.36"></div><div class="abs" style="left:61px;top:83px;width:1px;height:2px;background:#333333;opacity:0.36"></div>
<div class="abs" style="left:16px;top:85px;width:23px;height:2px;background:#333333;opacity:0.36"></div><div class="abs" style="left:39px;top:85px;width:1px;height:2px;background:#333333;opacity:0.36"></div><div class="abs" style="left:40px;top:85px;width:17px;height:2px;background:#333333;opacity:0.36"></div><div class="abs" style="left:57px;top:85px;width:1px;height:2px;background:#333333;opacity:0.36"></div>
<div class="abs" style="left:16px;top:87px;width:23px;height:2px;background:#333333;opacity:0.36"></div><div class="abs" style="left:39px;top:87px;width:1px;height:2px;background:#333333;opacity:0.36"></div><div class="abs" style="left:40px;top:87px;width:14px;height:2px;background:#333333;opacity:0.36"></div><div class="abs" style="left:54px;top:87px;width:1px;height:2px;background:#333333;opacity:0.36"></div>

<div class="abs" style="left:16px;top:91px;width:4px;height:2px;background:#0000ff;opacity:0.36"></div>
<div class="abs" style="left:20px;top:93px;width:4px;height:2px;background:#0000ff;opacity:0.36"></div><div class="abs" style="left:25px;top:93px;width:23px;height:2px;background:#333333;opacity:0.36"></div><div class="abs" style="left:48px;top:93px;width:1px;height:2px;background:#333333;opacity:0.36"></div><div class="abs" style="left:49px;top:93px;width:15px;height:2px;background:#333333;opacity:0.36"></div><div class="abs" style="left:65px;top:93px;width:4px;height:2px;background:#0000ff;opacity:0.36"></div><div class="abs" style="left:70px;top:93px;width:11px;height:2px;background:#a31515;opacity:0.36"></div>
<div class="abs" style="left:20px;top:95px;width:4px;height:2px;background:#0000ff;opacity:0.36"></div><div class="abs" style="left:25px;top:95px;width:5px;height:2px;background:#a31515;opacity:0.36"></div>
<div class="abs" style="left:16px;top:97px;width:3px;height:2px;background:#0000ff;opacity:0.36"></div><div class="abs" style="left:20px;top:97px;width:2px;height:2px;background:#0000ff;opacity:0.36"></div><div class="abs" style="left:23px;top:97px;width:13px;height:2px;background:#333333;opacity:0.36"></div>

<div class="abs" style="left:12px;top:101px;width:4px;height:2px;background:#0000ff;opacity:0.36"></div><div class="abs" style="left:17px;top:101px;width:9px;height:2px;background:#333333;opacity:0.36"></div>

<div class="abs" style="left:12px;top:105px;width:4px;height:2px;background:#0000ff;opacity:0.36"></div><div class="abs" style="left:17px;top:105px;width:4px;height:2px;background:#0000ff;opacity:0.36"></div><div class="abs" style="left:22px;top:105px;width:23px;height:2px;background:#333333;opacity:0.36"></div>
<div class="abs" style="left:16px;top:107px;width:2px;height:2px;background:#0000ff;opacity:0.36"></div><div class="abs" style="left:19px;top:107px;width:9px;height:2px;background:#333333;opacity:0.36"></div><div class="abs" style="left:28px;top:107px;width:1px;height:2px;background:#333333;opacity:0.36"></div><div class="abs" style="left:29px;top:107px;width:11px;height:2px;background:#333333;opacity:0.36"></div><div class="abs" style="left:41px;top:107px;width:1px;height:2px;background:#778899;opacity:0.36"></div><div class="abs" style="left:43px;top:107px;width:23px;height:2px;background:#333333;opacity:0.36"></div><div class="abs" style="left:66px;top:107px;width:1px;height:2px;background:#333333;opacity:0.36"></div><div class="abs" style="left:67px;top:107px;width:11px;height:2px;background:#333333;opacity:0.36"></div>

<div class="abs" style="left:8px;top:111px;width:1px;height:2px;background:#0431fa;opacity:0.36"></div>

<div class="abs" style="left:8px;top:115px;width:6px;height:2px;background:#0000ff;opacity:0.36"></div><div class="abs" style="left:15px;top:115px;width:1px;height:2px;background:#778899;opacity:0.36"></div><div class="abs" style="left:17px;top:115px;width:4px;height:2px;background:#0000ff;opacity:0.36"></div><div class="abs" style="left:22px;top:115px;width:6px;height:2px;background:#333333;opacity:0.36"></div>
</div>
<div class="abs" style="left:1347px;top:75px;width:1px;height:617px;background:#e5e5e5"></div>
<div class="abs" style="left:1348px;top:120px;width:12px;height:2px;background:#222"></div>
<div class="abs" style="left:270px;top:692px;width:1090px;height:47px;background:#fff;border-bottom:1px solid #dfe2e7"></div>
<div class="abs" style="left:282.2px;top:697.8px;width:86.30000000000001px;height:31.800000000000068px;border:1px solid #636a78;border-radius:6px;background:#fff"></div>
<svg style="left:292px;top:708px" width="12" height="12" viewBox="0 0 12 12" fill="none" stroke="#1f2530" stroke-width="1.1"><rect x="0" y="0" width="12" height="2.8" fill="#1f2530" stroke="none"/><path d="M0.55 0.6H11.45V11.45H0.55Z"/><path d="M0.6 5.6H11.4M0.6 8.5H11.4M6 2.8V11.4" stroke-width="1"/></svg>
<div class="t" style="left:313.7px;top:708.58px;font-size:12.9px;color:#232a36;font-weight:normal;font-style:normal;">Preview</div>
<div class="abs" style="left:377.2px;top:697.8px;width:88.5px;height:31.800000000000068px;border:1px solid #636a78;border-radius:6px;background:#fff"></div>
<svg style="left:386px;top:710.5px" width="14" height="8.5" viewBox="0 0 14 8.5" fill="none" stroke="#2a303b" stroke-width="1.15"><path d="M3.4 1.2L0.8 4.25L3.4 7.3M10.6 1.2L13.2 4.25L10.6 7.3M8.2 0.3L5.8 8.2"/></svg>
<div class="t" style="left:408px;top:708.33px;font-size:13.2px;color:#232a36;font-weight:normal;font-style:normal;">Compile</div>
<div class="abs" style="left:474.3px;top:697.8px;width:100.19999999999999px;height:31.800000000000068px;border:1px solid #636a78;border-radius:6px;background:#fff"></div>
<div class="abs" style="left:543px;top:699px;width:1px;height:30px;background:#5d6472"></div>
<svg style="left:483px;top:706.5px" width="14.5" height="14.5" viewBox="0 0 14.5 14.5" fill="none" stroke="#1f2530" stroke-width="1.15" stroke-linejoin="round"><path d="M11.5 0.56L8.38 3.68A1.3 1.3 0 0 0 10.22 5.52L13.34 2.4A4.6 4.6 0 0 1 7.29 8.73L2.94 13.08L0.82 10.96L5.17 6.61A4.6 4.6 0 0 1 11.5 0.56Z"/></svg>
<div class="t" style="left:505.2px;top:708.33px;font-size:13.2px;color:#232a36;font-weight:normal;font-style:normal;">Build</div>
<svg style="left:555px;top:711.5px" width="9" height="6" viewBox="0 0 9 6" fill="none" stroke="#3d4452" stroke-width="1.1"><path d="M0.5 0.6L4.5 5L8.5 0.6"/></svg>
<div class="abs" style="left:583.3px;top:697.8px;width:71.20000000000005px;height:31.800000000000068px;border:1px solid #636a78;border-radius:6px;background:#fff"></div>
<div class="abs" style="left:623px;top:699px;width:1px;height:30px;background:#5d6472"></div>
<div class="t" style="left:592.7px;top:708.16px;font-size:13.4px;color:#232a36;font-weight:normal;font-style:normal;">Lint</div>
<svg style="left:634.5px;top:711.5px" width="9" height="6" viewBox="0 0 9 6" fill="none" stroke="#3d4452" stroke-width="1.1"><path d="M0.5 0.6L4.5 5L8.5 0.6"/></svg>
<div class="abs" style="left:663.2px;top:697.8px;width:136.29999999999995px;height:31.800000000000068px;border:1px solid #636a78;border-radius:6px;background:#fff"></div>
<svg style="left:674.5px;top:705.5px" width="17" height="17" viewBox="0 0 17 17" fill="none" stroke="#161b26" stroke-width="1.15" stroke-linecap="round" stroke-linejoin="round"><path d="M9.6 0.85H1.8Q0.9 0.85 0.9 1.75V11.7Q0.9 12.6 1.8 12.6H6.8Q7.3 12.6 7.7 13L11.2 16V13.5Q11.2 12.6 12.1 12.6H15.2Q16.1 12.6 16.1 11.7V7.7"/><path d="M10.1 4.3Q10.3 6.7 12.8 6.9Q10.3 7.1 10.1 9.5Q9.9 7.1 7.4 6.9Q9.9 6.7 10.1 4.3Z" stroke-width="0.9"/><path d="M14.1 0.8Q14.25 2.65 16.1 2.8Q14.25 2.95 14.1 4.8Q13.95 2.95 12.1 2.8Q13.95 2.65 14.1 0.8Z" stroke-width="0.9"/></svg>
<div class="t" style="left:699.5px;top:708.16px;font-size:13.4px;color:#232a36;font-weight:normal;font-style:normal;">dbt Copilot</div>
<svg style="left:775.5px;top:710.5px" width="10" height="7" viewBox="0 0 10 7" fill="none" stroke="#2a303b" stroke-width="1.3"><path d="M0.6 0.8L5 5.6L9.4 0.8"/></svg>
<div class="abs" style="left:812px;top:692px;width:1px;height:46px;background:#e3e5ea"></div>
<div class="t" style="left:845.6px;top:708.50px;font-size:12.4px;color:#2a313d;font-weight:normal;font-style:normal;">Results</div>
<div class="t" style="left:919.4px;top:707.83px;font-size:13.2px;color:#2a313d;font-weight:normal;font-style:normal;">Code quality</div>
<div class="t" style="left:1025.6px;top:707.91px;font-size:13.1px;color:#2a313d;font-weight:normal;font-style:normal;">Compiled code</div>
<div class="t" style="left:1145.5px;top:708.25px;font-size:12.7px;color:#2a313d;font-weight:normal;font-style:normal;">Lineage</div>
<div class="abs" style="left:1129px;top:735.5px;width:78px;height:3px;background:#7b8494"></div>
<div class="abs" style="left:270px;top:739px;width:1090px;height:250px;background-color:#f7f8fa;background-image:radial-gradient(circle at 4.5px 6.5px,#d6d9de 0.55px,transparent 0.9px);background-size:9.135px 9.135px;background-position:0.5px 0;overflow:hidden">
<svg style="left:0;top:0" width="1089" height="250" fill="none" stroke="#b8bdc5" stroke-width="1"><path d="M56.7 127.5 C119.6 127.5 119.6 142.5 182.5 142.5"/><path d="M177.5 139.0 L182.0 142.5 L177.5 146.0"/><path d="M45.6 198.5 C114.1 198.5 114.1 142.5 182.5 142.5"/><path d="M177.5 139.0 L182.0 142.5 L177.5 146.0"/><path d="M45.6 198.5 C114.1 198.5 114.1 198.5 182.5 198.5"/><path d="M177.5 195.0 L182.0 198.5 L177.5 202.0"/><path d="M267.6 142.5 C317.0 142.5 317.0 142.5 366.5 142.5"/><path d="M361.5 139.0 L366.0 142.5 L361.5 146.0"/><path d="M447.8 142.5 C483.6 142.5 483.6 107.5 519.4 107.5"/><path d="M514.4 104.0 L518.9 107.5 L514.4 111.0"/><path d="M447.8 142.5 C483.6 142.5 483.6 162.5 519.4 162.5"/><path d="M514.4 159.0 L518.9 162.5 L514.4 166.0"/><path d="M447.8 142.5 C656.9 142.5 656.9 151.5 866.0 151.5"/><path d="M861.0 148.0 L865.5 151.5 L861.0 155.0"/><path d="M640.4 107.5 C753.2 107.5 753.2 151.5 866.0 151.5"/><path d="M861.0 148.0 L865.5 151.5 L861.0 155.0"/><path d="M640.4 107.5 C665.5 107.5 665.5 179.5 690.6 179.5"/><path d="M685.6 176.0 L690.1 179.5 L685.6 183.0"/><path d="M641.7 162.5 C666.2 162.5 666.2 179.5 690.6 179.5"/><path d="M685.6 176.0 L690.1 179.5 L685.6 183.0"/><path d="M641.7 162.5 C753.9 162.5 753.9 151.5 866.0 151.5"/><path d="M861.0 148.0 L865.5 151.5 L861.0 155.0"/><path d="M808.3 179.5 C837.2 179.5 837.2 151.5 866.0 151.5"/><path d="M861.0 148.0 L865.5 151.5 L861.0 155.0"/></svg>
</div>
<div class="abs" style="left:270px;top:739px;width:1090px;height:250px;overflow:hidden"><div class="abs" style="left:-270px;top:-739px;width:1360px;height:1028px">
<div class="abs" style="left:200px;top:843.2px;width:126.7px;height:42.2px;border:1px solid #9aa1ad;border-radius:4px;background:#fff"></div>
<div class="t" style="left:268.5px;top:861.57px;font-size:7.6px;color:#1f2633;font-weight:normal;font-style:normal;">stg_customers</div>
<div class="abs" style="left:200px;top:914.3px;width:115.6px;height:42.2px;border:1px solid #9aa1ad;border-radius:4px;background:#fff"></div>
<div class="t" style="left:267.5px;top:933.07px;font-size:7.6px;color:#1f2633;font-weight:normal;font-style:normal;">orders</div>
<div class="abs" style="left:200px;top:970.2px;width:191px;height:40px;border:1px solid #9aa1ad;border-radius:4px;background:#fff"></div>
<div class="abs" style="left:452.8px;top:858.6px;width:84.80000000000001px;height:42.39999999999998px;border:1px solid #9aa1ad;border-radius:4px;background:#fff"></div>
<div class="abs" style="left:461.5px;top:870px;width:20.5px;height:20.2px;border-radius:2.5px;background:#b2e2f8"></div>
<svg style="left:468.2px;top:873px" width="7" height="7" viewBox="0 0 8 8" fill="none" stroke="#1f2937" stroke-width="1"><path d="M4 0.5L7.3 2.2V5.8L4 7.5L0.7 5.8V2.2Z"/><path d="M0.7 2.2L4 3.9L7.3 2.2M4 3.9V7.5"/></svg>
<div class="t mono" style="left:461.5px;top:881.6px;width:20.5px;text-align:center;font-size:7.2px;font-weight:normal;color:#1f2937;-webkit-text-stroke:0.1px #1f2937">MDL</div>
<div class="t" style="left:489.9px;top:876.57px;font-size:7.6px;color:#1f2633;font-weight:normal;font-style:normal;">customers</div>
<div class="abs" style="left:636.5px;top:858.6px;width:81.29999999999995px;height:42.39999999999998px;border:1px solid #9aa1ad;border-radius:4px;background:#fff"></div>
<div class="abs" style="left:644.7px;top:870px;width:20.5px;height:20.2px;border-radius:2.5px;background:#fd97a3"></div>
<svg style="left:651.4000000000001px;top:873px" width="7" height="7" viewBox="0 0 8 8" fill="none" stroke="#3b2228" stroke-width="1"><circle cx="1.6" cy="1.6" r="1.1"/><circle cx="6.4" cy="3" r="1.1"/><circle cx="1.6" cy="6.4" r="1.1"/><path d="M1.6 2.7V5.3M2.7 2.4L5.3 3"/></svg>
<div class="t mono" style="left:644.7px;top:881.6px;width:20.5px;text-align:center;font-size:7.2px;font-weight:normal;color:#3b2228;-webkit-text-stroke:0.1px #3b2228">SEM</div>
<div class="t" style="left:673px;top:876.57px;font-size:7.6px;color:#1f2633;font-weight:normal;font-style:normal;">customers</div>
<div class="abs" style="left:452.8px;top:914.4px;width:182.59999999999997px;height:42.200000000000045px;border:1px solid #9aa1ad;border-radius:4px;background:#fff"></div>
<div class="abs" style="left:461.5px;top:925.8px;width:20.5px;height:20.2px;border-radius:2.5px;background:#a6efcb"></div>
<svg style="left:468.2px;top:928.8px" width="7" height="7" viewBox="0 0 8 8" fill="none" stroke="#2d5b4b" stroke-width="1"><path d="M1 1.2H7V7.6H1Z"/><path d="M2.6 0.4H5.4V1.8H2.6ZM2.5 4.6L3.6 5.6L5.6 3.4"/></svg>
<div class="t mono" style="left:461.5px;top:937.4px;width:20.5px;text-align:center;font-size:7.2px;font-weight:normal;color:#2d5b4b;-webkit-text-stroke:0.1px #2d5b4b">TST</div>
<div class="t" style="left:489.9px;top:932.35px;font-size:7.85px;color:#1f2633;font-weight:normal;font-style:normal;">test_order_items_compute_to_bools...</div>
<div class="abs" style="left:789.4px;top:823.3px;width:121.0px;height:41.90000000000009px;border:1px solid #9aa1ad;border-radius:4px;background:#fff"></div>
<div class="abs" style="left:798px;top:834.2px;width:20.5px;height:20.2px;border-radius:2.5px;background:#fddf85"></div>
<svg style="left:804.7px;top:837.2px" width="7" height="7" viewBox="0 0 8 8" fill="none" stroke="#3a3322" stroke-width="1"><path d="M0.5 0.5V7.5H7.5M2.2 6.5V3.5M4 6.5V1.8M5.8 6.5V2.8"/></svg>
<div class="t mono" style="left:798px;top:845.8000000000001px;width:20.5px;text-align:center;font-size:7.2px;font-weight:normal;color:#3a3322;-webkit-text-stroke:0.1px #3a3322">MET</div>
<div class="t" style="left:826.5px;top:840.00px;font-size:7.8px;color:#1f2633;font-weight:normal;font-style:normal;">count_lifetime_orders</div>
<div class="abs" style="left:789.4px;top:879.3px;width:122.30000000000007px;height:42.0px;border:1px solid #9aa1ad;border-radius:4px;background:#fff"></div>
<div class="abs" style="left:798px;top:890.2px;width:20.5px;height:20.2px;border-radius:2.5px;background:#fddf85"></div>
<svg style="left:804.7px;top:893.2px" width="7" height="7" viewBox="0 0 8 8" fill="none" stroke="#3a3322" stroke-width="1"><path d="M0.5 0.5V7.5H7.5M2.2 6.5V3.5M4 6.5V1.8M5.8 6.5V2.8"/></svg>
<div class="t mono" style="left:798px;top:901.8000000000001px;width:20.5px;text-align:center;font-size:7.2px;font-weight:normal;color:#3a3322;-webkit-text-stroke:0.1px #3a3322">MET</div>
<div class="t" style="left:826.5px;top:896.17px;font-size:7.6px;color:#1f2633;font-weight:normal;font-style:normal;">lifetime_spend_pretax</div>
<div class="abs" style="left:960.6px;top:896.9px;width:117.69999999999993px;height:41.89999999999998px;border:1px solid #9aa1ad;border-radius:4px;background:#fff"></div>
<div class="abs" style="left:969.3px;top:908px;width:20.5px;height:20.2px;border-radius:2.5px;background:#fddf85"></div>
<svg style="left:976.0px;top:911px" width="7" height="7" viewBox="0 0 8 8" fill="none" stroke="#3a3322" stroke-width="1"><path d="M0.5 0.5V7.5H7.5M2.2 6.5V3.5M4 6.5V1.8M5.8 6.5V2.8"/></svg>
<div class="t mono" style="left:969.3px;top:919.6px;width:20.5px;text-align:center;font-size:7.2px;font-weight:normal;color:#3a3322;-webkit-text-stroke:0.1px #3a3322">MET</div>
<div class="t" style="left:997.8px;top:914.85px;font-size:7.5px;color:#1f2633;font-weight:normal;font-style:normal;">average_order_value</div>
<div class="abs" style="left:1136.1px;top:868.9px;width:129.4000000000001px;height:42.5px;border:1px solid #9aa1ad;border-radius:4px;background:#fff"></div>
<div class="abs" style="left:1144.5px;top:880px;width:20.5px;height:20.2px;border-radius:2.5px;background:#d6d3d1"></div>
<svg style="left:1151.2px;top:883px" width="7" height="7" viewBox="0 0 8 8" fill="none" stroke="#3b4250" stroke-width="1"><path d="M1 0.8H7V7.2H1Z"/><path d="M3 5.6V2.4H4.6Q5.6 2.4 5.6 3.3Q5.6 4.2 4.6 4.2H3M4.4 4.2L5.6 5.6"/></svg>
<div class="t mono" style="left:1144.5px;top:891.6px;width:20.5px;text-align:center;font-size:7.2px;font-weight:normal;color:#3b4250;-webkit-text-stroke:0.1px #3b4250">QRY</div>
<div class="t" style="left:1172.4px;top:886.10px;font-size:7.8px;color:#1f2633;font-weight:normal;font-style:normal;">customer_order_metrics</div>
</div></div>
<div class="abs" style="left:936.2px;top:762.8px;width:296.8px;height:40.2px;border:1px solid #737a87;border-radius:6px;background:#fff;overflow:hidden"><div class="abs" style="left:191.5px;top:0;width:106px;height:39px;background:#f0f1f4;border-left:1px solid #737a87"></div></div>
<div class="t" style="left:948.3px;top:777.58px;font-size:12.9px;color:#232a36;font-weight:normal;font-style:normal;">2+customers+2</div>
<div class="t" style="left:1139.6px;top:777.45px;font-size:13.05px;color:#232a36;font-weight:normal;font-style:normal;">Update Graph</div>
<div class="abs" style="left:1249.4px;top:762.8px;width:39.6px;height:40.2px;border:1px solid #737a87;border-radius:6px;background:#fff"></div>
<svg style="left:1261px;top:775px" width="16" height="16" viewBox="0 0 16 16" fill="none" stroke="#1f2530" stroke-width="1.3"><path d="M0.7 5.4V0.7H5.4M10.6 0.7H15.3V5.4M15.3 10.6V15.3H10.6M5.4 15.3H0.7V10.6"/></svg>
<div class="abs" style="left:1297.3px;top:762.8px;width:39.5px;height:40.2px;border:1px solid #737a87;border-radius:6px;background:#fff"></div>
<svg style="left:1308.5px;top:774.5px" width="17" height="17" viewBox="0 0 17 17" fill="none" stroke="#1f2530" stroke-width="1.3"><path d="M14.9 9.4A6.4 6.4 0 1 1 8.5 3H14"/><path d="M11.6 0.8L14.2 3L11.6 5.3" stroke-linejoin="round"/></svg>
<div class="abs" style="left:270px;top:983px;width:1090px;height:6px;background:linear-gradient(to bottom,rgba(200,204,212,0),rgba(200,204,212,0.55))"></div>
<div class="abs" style="left:0;top:988.5px;width:1360px;height:39.5px;background:#fff;border-top:1.5px solid #d5d8dd"></div>
<svg style="left:11px;top:1005.5px" width="9" height="6" viewBox="0 0 9 6" fill="none" stroke="#3d4452" stroke-width="1.1"><path d="M0.5 5.2L4.5 0.8L8.5 5.2"/></svg>
<div class="abs" style="left:34px;top:989px;width:1px;height:39px;background:#e3e5ea"></div>
<div class="abs" style="left:38px;top:992px;width:940px;height:40px;border:1px solid #f0f1f4;border-radius:6px;background:#fff"></div>
<div class="t" style="left:51.6px;top:1003.83px;font-size:13.2px;color:#4a5262;font-weight:normal;font-style:normal;">dbt build --select &lt;model_name&gt;</div>
<div class="abs" style="left:990.3px;top:1000.4px;width:39.4px;height:19px;border:1px solid #3a4150;border-radius:10px;background:#fff"></div>
<div class="abs" style="left:995px;top:1004px;width:12px;height:12px;border-radius:50%;background:#2e3544"></div>
<div class="t" style="left:1041.6px;top:1003.71px;font-size:12.75px;color:#2e3544;font-weight:bold;font-style:normal;">Defer to staging/production</div>
<svg style="left:1212px;top:1003px" width="12" height="12" viewBox="0 0 12 12" fill="none" stroke="#4b5261" stroke-width="1"><circle cx="6" cy="6" r="5.4"/><path d="M4.3 4.5Q4.3 2.8 6 2.8Q7.7 2.8 7.7 4.3Q7.7 5.3 6.6 5.8Q6 6.1 6 7.2"/><circle cx="6" cy="9" r="0.3" fill="#4b5261"/></svg>
<div class="abs" style="left:1236.2px;top:998px;width:75px;height:24px;border:1px solid #a3e9c6;border-radius:12px;background:#cff6e2"></div>
<div class="abs" style="left:1248.8px;top:1003.5px;width:12px;height:12px;border:1.2px solid #1b6b52;border-radius:50%"></div>
<div class="t" style="left:1267.8px;top:1005.70px;font-size:10.4px;color:#1b6b52;font-weight:normal;font-style:normal;">Ready</div>
<div class="abs" style="left:1319px;top:994.2px;width:33.5px;height:31.5px;border:1px solid #4e5563;border-radius:5px;background:#fff"></div>
<svg style="left:1320px;top:1000px" width="30" height="20" viewBox="0 0 30 20" fill="#1f2530"><circle cx="10.6" cy="10" r="1.45"/><circle cx="15.9" cy="10" r="1.45"/><circle cx="21.2" cy="10" r="1.45"/></svg>
<div class="red" style="left:2px;top:35px;width:273.5px;height:176px"></div>
<div class="red" style="left:272px;top:35px;width:1082.5px;height:656.5px"></div>
<div class="red" style="left:1258.5px;top:35px;width:96px;height:97px"></div>
<div class="rl" style="left:115.8px;top:160.2px">3</div>
<div class="rl" style="left:890.7px;top:234.5px">1</div>
<div class="rl" style="left:1302.8px;top:89.1px">2</div>
</body></html>
